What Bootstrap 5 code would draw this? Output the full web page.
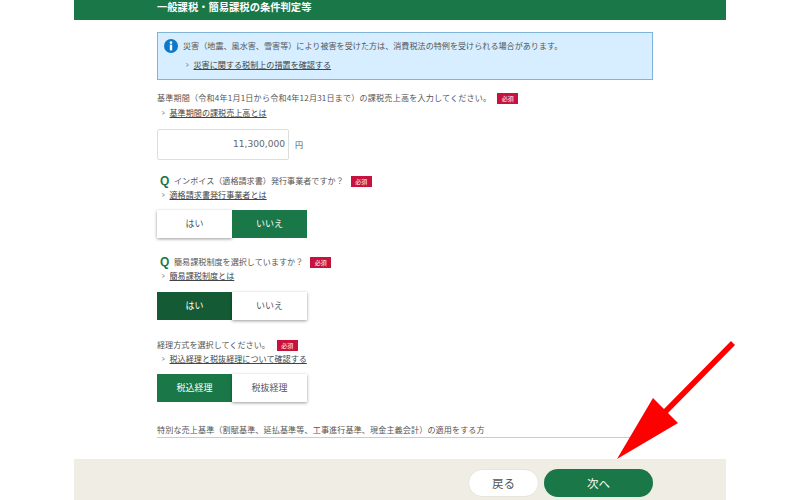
<!DOCTYPE html>
<html lang="ja">
<head>
<meta charset="utf-8">
<title>条件判定</title>
<link href="https://cdn.jsdelivr.net/npm/bootstrap@5.3.0/dist/css/bootstrap.min.css" rel="stylesheet">
<style>
html,body{height:500px;overflow:hidden;background:#fff}
body{font-family:"Noto Sans CJK JP","Liberation Sans",sans-serif;font-size:8.1px;color:#555;position:relative;line-height:14px}
.sheet{width:652px;height:500px;margin-left:74px}
.head-bar{height:20px;background:#1a7747;color:#fff;font-size:10.3px;font-weight:700;line-height:12px;padding:1px 0 0 83px}
.form-body{padding:12px 73px 0 83px;height:439px}
.note-box{height:48px;background:#d6eeff;border:1px solid #7fb5dc;padding:6px 0 0 6px}
.note-ico{width:14px;height:14px;margin-right:5px}
.note-link{margin:5px 0 0 21px}
.tip{color:#777;margin-right:4px;display:inline-block;transform:scaleX(.6)}
a.plain{color:#444;text-decoration:underline}
.must{background:#c8123e;color:#fff;font-size:6px;line-height:11px;width:21px;text-align:center;display:inline-block;margin-left:6px}
.lbl-a{margin-top:11px;letter-spacing:.17px}
.lbl-a a,.lbl-a .must{letter-spacing:0}
.link-a{margin-top:1px}
.amount{width:132px;height:31px;border:1px solid #ddd;font-family:"DejaVu Sans",sans-serif;font-size:9.1px;color:#666;text-align:right;padding-right:3px;line-height:29px;border-radius:2px}
.amount-wrap{margin-top:9px}
.yen{margin-left:6px}
.q-mark{font-family:"Liberation Sans",sans-serif;font-weight:700;font-size:12px;color:#1a7747;width:10px;margin-left:3px}
.q-row{margin-top:14px}
.q-row .must,.q-next .must{margin-left:7px}
.q-next{margin-top:17px}
.chooser{width:150px;height:28px;margin-top:8px}
.chooser-low{margin-top:9px}
.pick{width:75px;height:28px;padding:0;border-radius:0;border:0;font-size:9px;line-height:28px;text-align:center}
.pick-off{background:#fff;color:#555;box-shadow:0 1px 3px rgba(0,0,0,.4)}
.pick-on{background:#1a7747;color:#fff}
.pick-dark{background:#145a34;color:#fff}
.plain-q{margin-top:18px}
.plain-q .must{margin-left:7px}
.sp-row{margin-top:21px;border-bottom:1px solid #ccc;height:15px;line-height:14px;letter-spacing:.1px}
.foot-bar{height:41px;background:#f0ede4;padding:10px 73px 0 0}
.pill{height:28px;border-radius:14px;font-size:11.5px;line-height:28px;padding:0;text-align:center}
.pill-back{width:71px;background:#fff;color:#555;border:1px solid #e8e4da;line-height:26px;margin-right:5px}
.pill-next{width:109px;background:#1a7747;color:#fff;border:0}
.pointer-art{position:absolute;left:0;top:0;width:800px;height:500px;pointer-events:none}
</style>
</head>
<body>
<div class="sheet d-flex flex-column">
  <div class="head-bar">一般課税・簡易課税の条件判定等</div>
  <div class="form-body">
    <div class="note-box">
      <div class="d-flex align-items-center">
        <svg class="note-ico" viewBox="0 0 14 14"><circle cx="7" cy="7" r="7" fill="#0b78c9"/><circle cx="7" cy="3.6" r="1.3" fill="#fff"/><rect x="5.8" y="5.6" width="2.4" height="5.8" fill="#fff"/></svg>
        <span>災害（地震、風水害、雪害等）により被害を受けた方は、消費税法の特例を受けられる場合があります。</span>
      </div>
      <div class="note-link"><span class="tip">&gt;</span><a class="plain" href="#">災害に関する税制上の措置を確認する</a></div>
    </div>

    <div class="lbl-a">基準期間（令和4年1月1日から令和4年12月31日まで）の課税売上高を入力してください。<span class="must">必須</span></div>
    <div class="link-a"><span class="tip ms-1">&gt;</span><a class="plain" href="#">基準期間の課税売上高とは</a></div>
    <div class="amount-wrap d-flex align-items-center">
      <div class="amount">11,300,000</div><span class="yen">円</span>
    </div>

    <div class="q-row d-flex align-items-center"><span class="q-mark">Q</span><span class="ms-1">インボイス（適格請求書）発行事業者ですか？</span><span class="must">必須</span></div>
    <div><span class="tip ms-1">&gt;</span><a class="plain" href="#">適格請求書発行事業者とは</a></div>
    <div class="chooser d-flex">
      <button type="button" class="btn pick pick-off">はい</button>
      <button type="button" class="btn pick pick-on">いいえ</button>
    </div>

    <div class="q-next d-flex align-items-center"><span class="q-mark">Q</span><span class="ms-1">簡易課税制度を選択していますか？</span><span class="must">必須</span></div>
    <div><span class="tip ms-1">&gt;</span><a class="plain" href="#">簡易課税制度とは</a></div>
    <div class="chooser chooser-low d-flex">
      <button type="button" class="btn pick pick-dark">はい</button>
      <button type="button" class="btn pick pick-off">いいえ</button>
    </div>

    <div class="plain-q">経理方式を選択してください。<span class="must">必須</span></div>
    <div><span class="tip ms-1">&gt;</span><a class="plain" href="#">税込経理と税抜経理について確認する</a></div>
    <div class="chooser d-flex">
      <button type="button" class="btn pick pick-on">税込経理</button>
      <button type="button" class="btn pick pick-off">税抜経理</button>
    </div>

    <div class="sp-row">特別な売上基準（割賦基準、延払基準等、工事進行基準、現金主義会計）の適用をする方</div>
  </div>
  <div class="foot-bar d-flex justify-content-end">
    <button type="button" class="btn pill pill-back">戻る</button>
    <button type="button" class="btn pill pill-next">次へ</button>
  </div>
</div>
<svg class="pointer-art" viewBox="0 0 800 500"><polygon points="617,459 653,398 664,409 731,341 735,345 668,413 678,423" fill="#fe0000"/></svg>
</body>
</html>
